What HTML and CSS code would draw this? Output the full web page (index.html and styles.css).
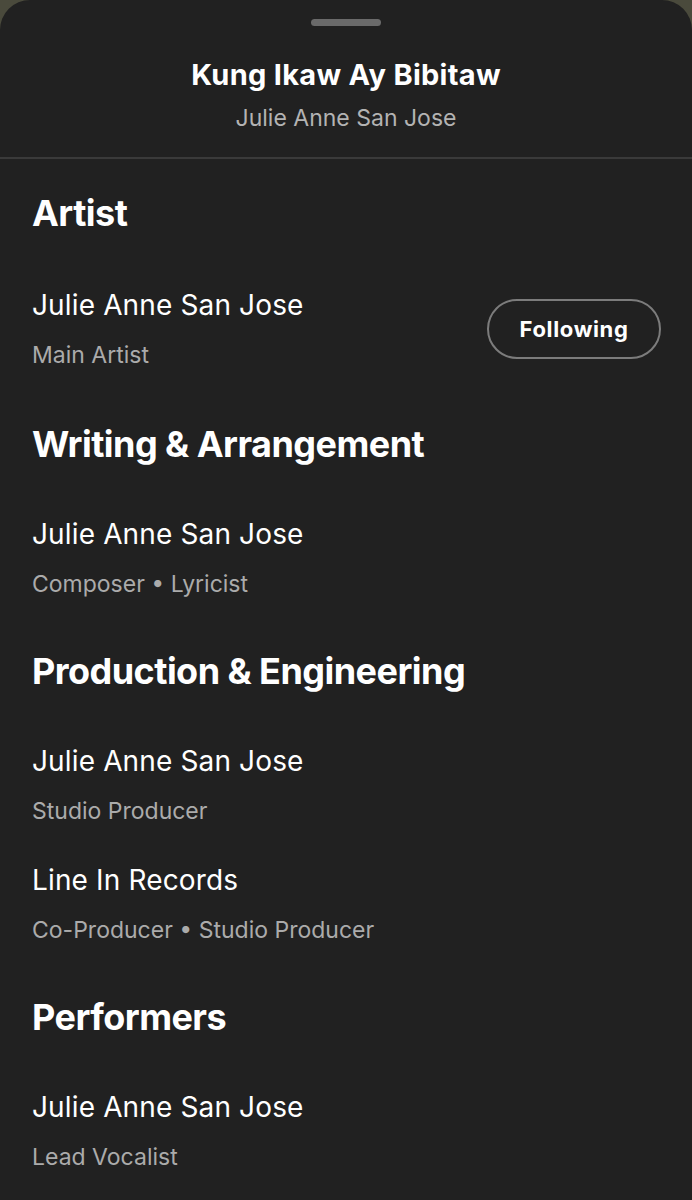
FILE: index.html
```html
<!DOCTYPE html>
<html lang="en">
<head>
  <meta charset="utf-8">
  <meta name="viewport" content="width=device-width, initial-scale=1.0">
  <title>Credits</title>
  <link rel="stylesheet" href="styles.css">
</head>
<body>
  <div class="sheet">
    <div class="handle"></div>

    <div class="header">
      <h1 class="title">Kung Ikaw Ay Bibitaw</h1>
      <p class="subtitle">Julie Anne San Jose</p>
    </div>

    <div class="credits">
      <section class="section">
        <h2>Artist</h2>
        <div class="row">
          <div class="person">
            <p class="name">Julie Anne San Jose</p>
            <p class="role">Main Artist</p>
          </div>
          <button class="follow">Following</button>
        </div>
      </section>

      <section class="section">
        <h2>Writing &amp; Arrangement</h2>
        <div class="person">
          <p class="name">Julie Anne San Jose</p>
          <p class="role">Composer &bull; Lyricist</p>
        </div>
      </section>

      <section class="section">
        <h2>Production &amp; Engineering</h2>
        <div class="person">
          <p class="name">Julie Anne San Jose</p>
          <p class="role">Studio Producer</p>
        </div>
        <div class="person">
          <p class="name">Line In Records</p>
          <p class="role">Co-Producer &bull; Studio Producer</p>
        </div>
      </section>

      <section class="section">
        <h2>Performers</h2>
        <div class="person">
          <p class="name">Julie Anne San Jose</p>
          <p class="role">Lead Vocalist</p>
        </div>
      </section>
    </div>
  </div>
</body>
</html>
```

FILE: styles.css
```css
* {
  box-sizing: border-box;
}

body {
  margin: 0;
  background-color: #4a4a3c;
  font-family: Inter, "Noto Sans", sans-serif;
  color: #ffffff;
}

h1, h2, p {
  margin: 0;
}

.sheet {
  min-height: 1200px;
  background-color: #212121;
  border-radius: 30px 30px 0 0;
  padding-top: 19px;
}

.handle {
  width: 70px;
  height: 7px;
  margin: 0 auto;
  border-radius: 4px;
  background-color: #6a6a6a;
}

.header {
  margin-top: 31px;
  padding-bottom: 24px;
  border-bottom: 2px solid #3a3a3a;
  text-align: center;
}

.title {
  font-size: 29px;
  line-height: 36px;
  font-weight: 700;
  letter-spacing: 0.01em;
}

.subtitle {
  margin-top: 10px;
  font-size: 23px;
  line-height: 30px;
  color: #b3b3b3;
}

.credits {
  padding: 32px 32px 0 32px;
}

.section {
  display: flex;
  flex-direction: column;
  gap: 36px;
  margin-bottom: 50px;
}

.section h2 {
  font-size: 36px;
  line-height: 44px;
  font-weight: 700;
  letter-spacing: -0.015em;
  margin-bottom: 14px;
}

.row {
  display: flex;
  align-items: center;
  justify-content: space-between;
  margin-top: 2px;
  margin-bottom: 2px;
}

.person {
  display: flex;
  flex-direction: column;
  gap: 17px;
}

.name {
  font-size: 28px;
  line-height: 36px;
  letter-spacing: 0.005em;
}

.role {
  font-size: 23px;
  line-height: 30px;
  color: #ababab;
}

.follow {
  width: 174px;
  height: 60px;
  margin-right: -1px;
  border: 2px solid #7c7c7c;
  border-radius: 30px;
  background-color: transparent;
  color: #ffffff;
  font-family: Inter, "Noto Sans", sans-serif;
  font-size: 22px;
  font-weight: 700;
  letter-spacing: 0.03em;
  cursor: pointer;
}
```
